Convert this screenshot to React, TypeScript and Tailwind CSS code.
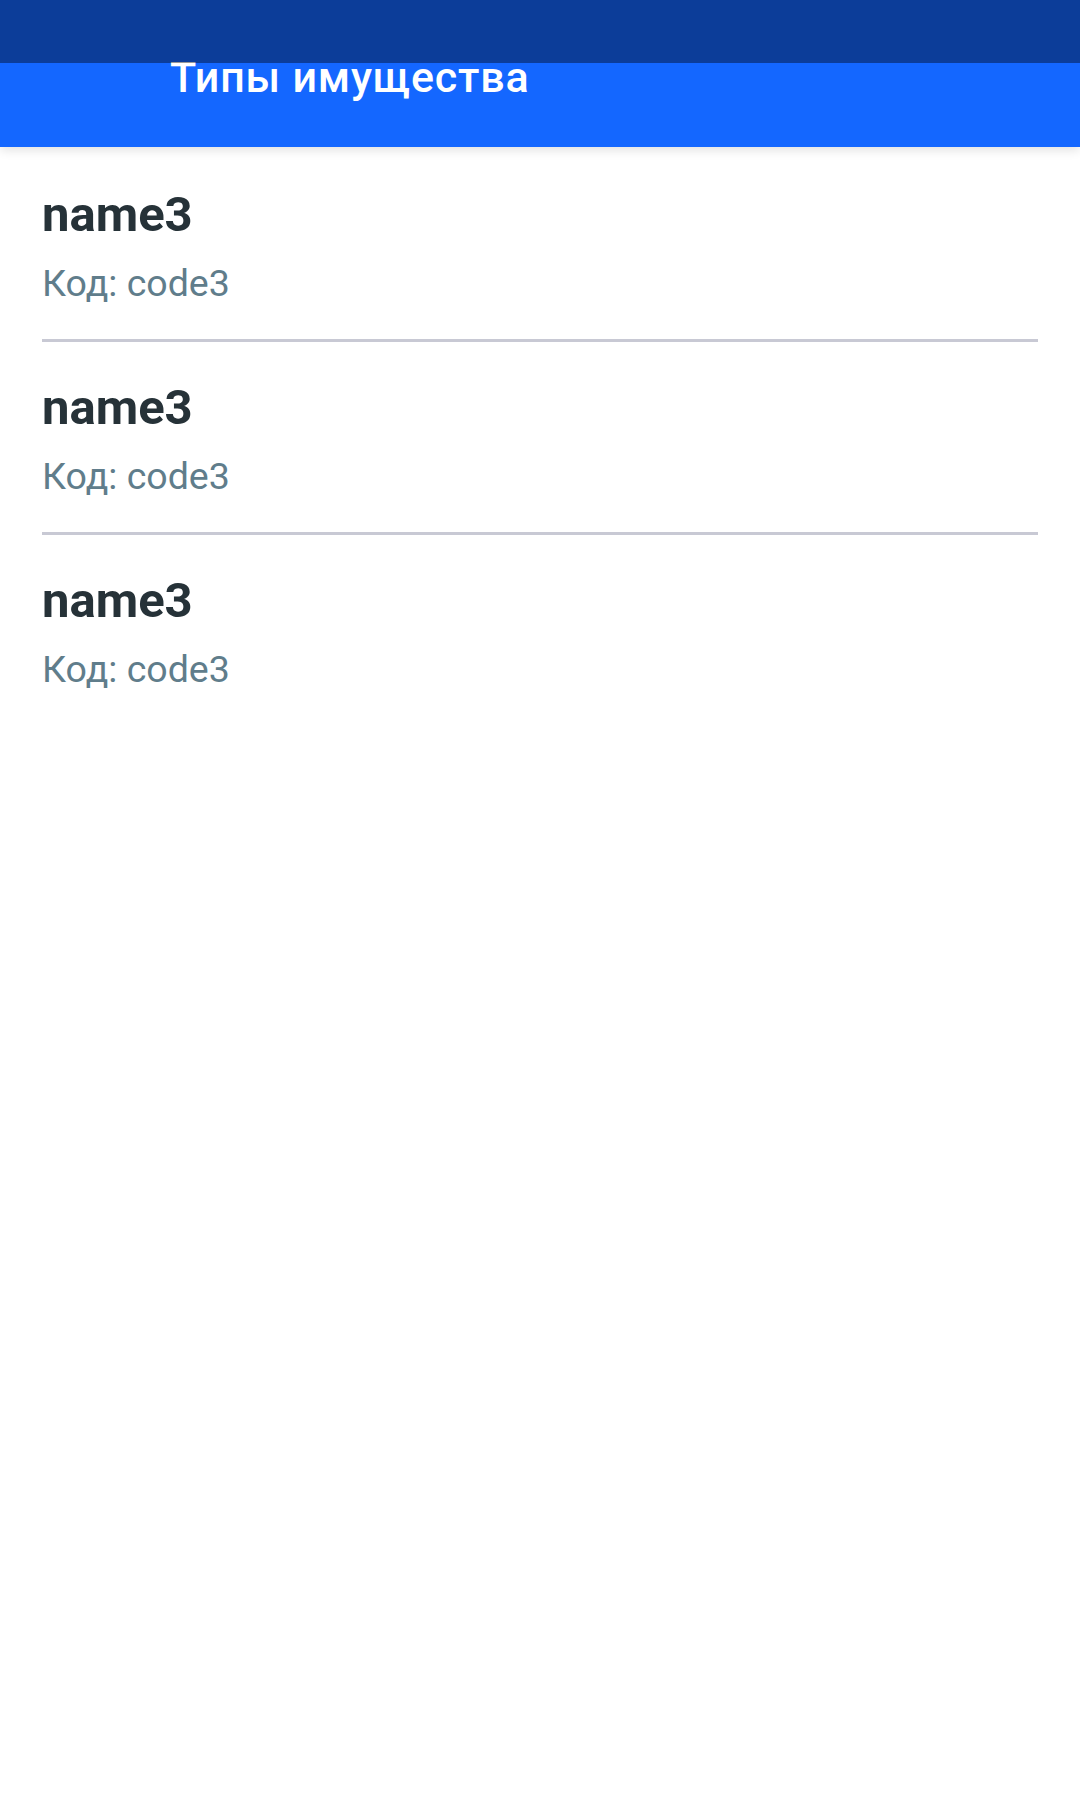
import React from "react";

const items = [
  { name: "name3", code: "code3" },
  { name: "name3", code: "code3" },
  { name: "name3", code: "code3" },
];

export default function App() {
  return (
    <div className="relative min-h-[1794px] w-[1080px] bg-white font-['Roboto',sans-serif]">
      <div className="absolute left-0 top-0 z-20 h-[63px] w-full bg-black/40" />
      <header className="relative z-10 flex h-[147px] items-center bg-[#1467ff] pl-[170px] pt-[6px] shadow-[0_3px_10px_rgba(0,0,0,0.12)]">
        <h1 className="text-[43px] font-medium leading-[50px] tracking-[0.8px] text-white">
          Типы имущества
        </h1>
      </header>
      <main className="px-[42px] pt-[2px]">
        {items.map((it, i) => (
          <div
            key={i}
            className={`pt-[38px] pb-[34px] ${i < items.length - 1 ? "border-b-[3px] border-[#c8c9d4]" : ""}`}
          >
            <div className="text-[49px] font-bold leading-[56px] text-[#263238]">{it.name}</div>
            <div className="mt-[18px] text-[37.5px] leading-[44px] text-[#607d8b]">Код: {it.code}</div>
          </div>
        ))}
      </main>
    </div>
  );
}
